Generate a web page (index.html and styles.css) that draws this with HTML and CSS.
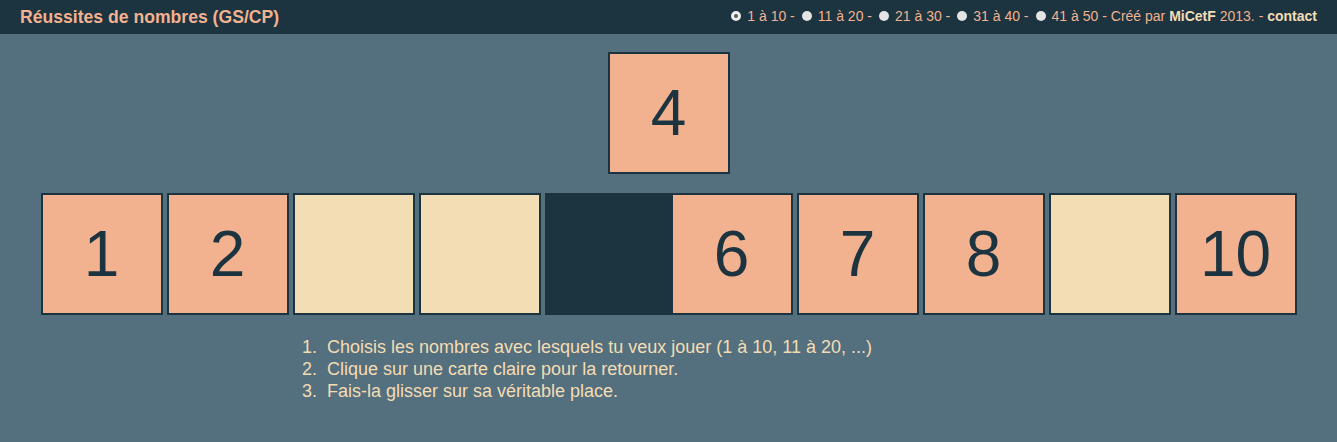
FILE: index.html
```html
<!DOCTYPE html>
<html lang="fr">
<head>
<meta charset="utf-8">
<title>Réussites de nombres (GS/CP)</title>
<link rel="stylesheet" href="styles.css">
</head>
<body>
<header class="topbar">
  <h1 class="title">Réussites de nombres (GS/CP)</h1>
  <nav class="menu">
    <label class="opt"><span class="radio checked"></span>1 à 10 -</label>
    <label class="opt"><span class="radio"></span>11 à 20 -</label>
    <label class="opt"><span class="radio"></span>21 à 30 -</label>
    <label class="opt"><span class="radio"></span>31 à 40 -</label>
    <label class="opt last"><span class="radio"></span>41 à 50 -</label>
    <span class="credit">Créé par <b class="hl">MiCetF</b> 2013. - <b class="hl">contact</b></span>
  </nav>
</header>
<main class="game">
  <div class="pick">
    <div class="card salmon">4</div>
  </div>
  <div class="row">
    <div class="card salmon">1</div>
    <div class="card salmon">2</div>
    <div class="card beige"></div>
    <div class="card beige"></div>
    <div class="slot"></div>
    <div class="card salmon">6</div>
    <div class="card salmon">7</div>
    <div class="card salmon">8</div>
    <div class="card beige"></div>
    <div class="card salmon">10</div>
  </div>
  <ol class="rules">
    <li>Choisis les nombres avec lesquels tu veux jouer (1 à 10, 11 à 20, ...)</li>
    <li>Clique sur une carte claire pour la retourner.</li>
    <li>Fais-la glisser sur sa véritable place.</li>
  </ol>
</main>
</body>
</html>
```
FILE: styles.css
```css
html, body {
  margin: 0;
  padding: 0;
}
body {
  background: #546f7d;
  font-family: "Liberation Sans", Arial, sans-serif;
  height: 442px;
  overflow: hidden;
}
.topbar {
  background: #1c3340;
  height: 34px;
  display: flex;
  align-items: center;
  justify-content: space-between;
  padding: 0 20px;
}
.title {
  margin: 0;
  font-size: 17.6px;
  font-weight: bold;
  color: #f2b28f;
}
.menu {
  display: flex;
  align-items: center;
  font-size: 14px;
  color: #f2b28f;
  margin-top: -2px;
}
.opt {
  display: flex;
  align-items: center;
  margin-right: 7px;
}
.opt.last {
  margin-right: 4px;
}
.radio {
  width: 10px;
  height: 10px;
  border-radius: 50%;
  background: #e4e4e4;
  margin-right: 6px;
  box-sizing: border-box;
}
.radio.checked {
  background: #5a5a5a;
  border: 3px solid #eeeeee;
}
.credit .hl {
  color: #f3ddb4;
}
.game {
  display: flex;
  flex-direction: column;
  align-items: center;
  padding-top: 18px;
}
.pick {
  display: flex;
  justify-content: center;
  margin-bottom: 19px;
}
.row {
  display: flex;
  gap: 4px;
}
.card {
  width: 122px;
  height: 122px;
  box-sizing: border-box;
  border: 2px solid #1c3340;
  display: flex;
  align-items: center;
  justify-content: center;
  font-size: 64px;
  color: #1c3340;
}
.salmon { background: #f2b28f; }
.beige { background: #f3ddb4; }
.slot {
  width: 126px;
  height: 122px;
  margin-right: -4px;
  background: #1c3340;
}
.rules {
  align-self: flex-start;
  margin: 21px 0 0 287px;
  padding-left: 40px;
  color: #f3ddb4;
  font-size: 18px;
  line-height: 22px;
}
.rules li::marker {
  content: counter(list-item) ".  ";
}
```
